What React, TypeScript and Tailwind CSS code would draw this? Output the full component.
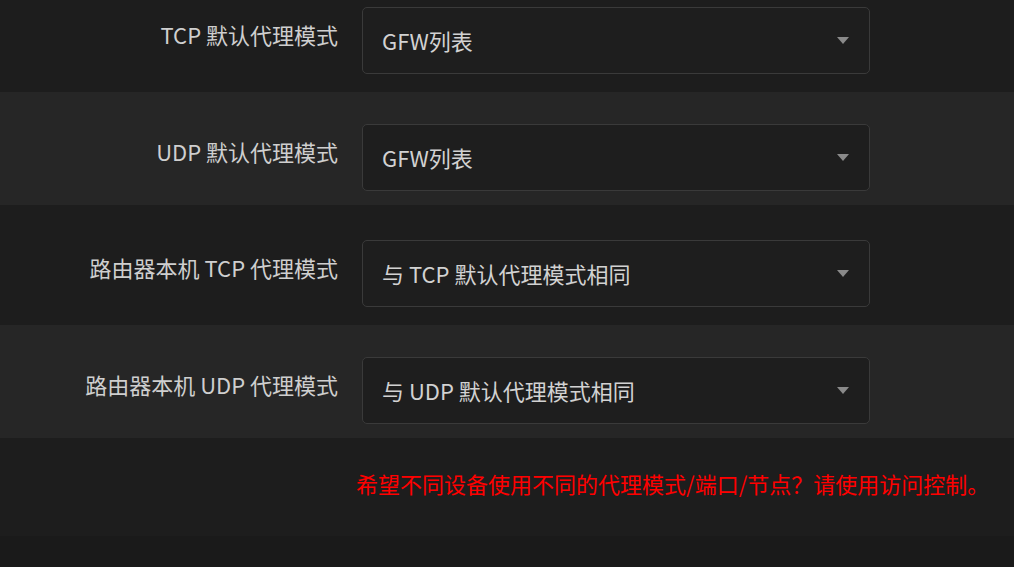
const font = { fontFamily: '"Noto Sans CJK SC", "Noto Sans", sans-serif' };

function ModeSelect({ value }: { value: string }) {
  return (
    <div className="flex h-[67px] w-[508px] items-center justify-between rounded-[5px] border border-[#3a3a3a] bg-[#1e1e1e] pl-[19px] pr-[20px]">
      <span className="-mt-[1px] text-[22px] text-[#d2d2d2]">{value}</span>
      <svg width="12" height="7" viewBox="0 0 12 7">
        <path d="M0 0 H12 L6 7 Z" fill="#8a8a8a" />
      </svg>
    </div>
  );
}

function Row({ label, value, className }: { label: string; value: string; className: string }) {
  return (
    <div className={`flex items-start gap-[24px] ${className}`}>
      <div className="mt-[11px] w-[338px] text-right text-[22px] leading-[32px] text-[#cfcfcf]">{label}</div>
      <ModeSelect value={value} />
    </div>
  );
}

export default function App() {
  const rows = [
    { label: 'TCP 默认代理模式', value: 'GFW列表', className: 'h-[92px] pt-[7px] bg-[#1d1d1d]' },
    { label: 'UDP 默认代理模式', value: 'GFW列表', className: 'h-[113px] pt-[32px] bg-[#262626]' },
    { label: '路由器本机 TCP 代理模式', value: '与 TCP 默认代理模式相同', className: 'h-[120px] pt-[35px] bg-[#1d1d1d]' },
    { label: '路由器本机 UDP 代理模式', value: '与 UDP 默认代理模式相同', className: 'h-[113px] pt-[32px] bg-[#262626]' },
  ];

  return (
    <div className="h-[567px] w-[1014px] overflow-hidden bg-[#1a1a1a]" style={font}>
      {rows.map((r, i) => (
        <Row key={i} {...r} />
      ))}
      <div className="h-[98px] bg-[#1d1d1d] pl-[356px] pt-[29px]">
        <p className="text-[22px] leading-[32px] text-[#ff0000]">
          希望不同设备使用不同的代理模式/端口/节点？请使用访问控制。
        </p>
      </div>
    </div>
  );
}
